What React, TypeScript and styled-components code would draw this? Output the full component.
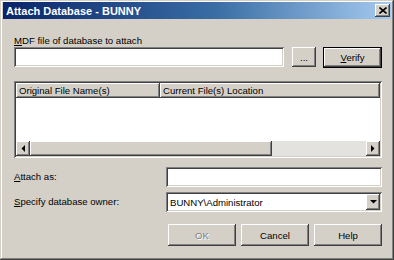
import React from "react";
import styled, { createGlobalStyle, css } from "styled-components";

const GlobalStyle = createGlobalStyle`
  html, body { margin: 0; padding: 0; background: #d4d0c8; }
  * { box-sizing: border-box; }
  body { font-family: "Liberation Sans", Arial, sans-serif; font-size: 9.6px; color: #000; }
`;

const raised = css`
  background: #d4d0c8;
  box-shadow: inset -1px -1px #404040, inset 1px 1px #ffffff,
    inset -2px -2px #808080, inset 2px 2px #d4d0c8;
`;

const sunken = css`
  background: #ffffff;
  box-shadow: inset 1px 1px #808080, inset -1px -1px #ffffff,
    inset 2px 2px #404040, inset -2px -2px #d4d0c8;
`;

const Window = styled.div`
  width: 394px;
  height: 260px;
  display: flex;
  flex-direction: column;
  padding: 2px 3px 3px 3px;
  background: #d4d0c8;
  box-shadow: inset -1px -1px #404040, inset 1px 1px #d4d0c8,
    inset -2px -2px #808080, inset 2px 2px #ffffff;
`;

const TitleBar = styled.div`
  height: 17px;
  display: flex;
  align-items: center;
  justify-content: space-between;
  padding: 0 1px 0 3px;
  background: linear-gradient(90deg, #0a246a 0%, #3a6ea5 55%, #a6caf0 100%);
`;

const TitleText = styled.span`
  color: #fff;
  font-weight: bold;
  font-size: 11px;
`;

const CloseButton = styled.div`
  ${raised};
  width: 15px;
  height: 13px;
  display: flex;
  align-items: center;
  justify-content: center;
`;

const Content = styled.div`
  flex: 1;
  display: flex;
  flex-direction: column;
  padding: 16px 9px 0 11px;
`;

const Label = styled.div`
  height: 12px;
  line-height: 12px;
  white-space: nowrap;
`;

const Key = styled.span`
  text-decoration: underline;
`;

const FileRow = styled.div`
  display: flex;
  align-items: center;
  height: 20px;
`;

const TextBox = styled.div<{ $width?: number }>`
  ${sunken};
  height: 20px;
  flex: ${(p) => (p.$width ? `0 0 ${p.$width}px` : "1")};
`;

const Button = styled.div<{ $width: number; $height?: number; $default?: boolean; $disabled?: boolean; $gap?: number }>`
  ${raised};
  width: ${(p) => p.$width}px;
  height: ${(p) => p.$height ?? 20}px;
  margin-left: ${(p) => p.$gap ?? 0}px;
  display: flex;
  align-items: center;
  justify-content: center;
  ${(p) =>
    p.$default &&
    css`
      box-shadow: inset 0 0 0 1px #000, inset -2px -2px #404040, inset 2px 2px #ffffff,
        inset -3px -3px #808080;
    `}
  ${(p) =>
    p.$disabled &&
    css`
      color: #808080;
      text-shadow: 1px 1px #ffffff;
    `}
`;

const ListView = styled.div`
  ${sunken};
  margin-top: 14px;
  height: 77px;
  padding: 2px;
  display: flex;
  flex-direction: column;
`;

const Header = styled.div`
  display: flex;
  height: 15px;
`;

const HeaderCell = styled.div<{ $width?: number }>`
  ${raised};
  flex: ${(p) => (p.$width ? `0 0 ${p.$width}px` : "1")};
  height: 15px;
  line-height: 15px;
  padding-left: 3px;
  white-space: nowrap;
  overflow: hidden;
`;

const ListBody = styled.div`
  flex: 1;
  background: #fff;
`;

const ScrollBar = styled.div`
  display: flex;
  height: 15px;
`;

const ScrollArrow = styled.div`
  ${raised};
  width: 14px;
  height: 15px;
  display: flex;
  align-items: center;
  justify-content: center;
`;

const Thumb = styled.div`
  ${raised};
  height: 15px;
`;

const Track = styled.div`
  flex: 1;
  background: #e4e2de;
`;

const FieldRow = styled.div<{ $top: number }>`
  display: grid;
  grid-template-columns: 152px 1fr;
  align-items: center;
  height: 20px;
  margin-top: ${(p) => p.$top}px;
`;

const Combo = styled.div`
  ${sunken};
  height: 20px;
  display: flex;
  align-items: center;
  justify-content: space-between;
  padding: 2px 2px 2px 4px;
`;

const ComboText = styled.span`
  white-space: nowrap;
`;

const ComboButton = styled.div`
  ${raised};
  width: 14px;
  height: 16px;
  display: flex;
  align-items: center;
  justify-content: center;
`;

const ButtonRow = styled.div`
  display: flex;
  justify-content: flex-end;
  margin-top: 12px;
`;

const ArrowLeft = () => (
  <svg width="4" height="7" viewBox="0 0 4 7">
    <polygon points="4,0 0.5,3.5 4,7" fill="#000" />
  </svg>
);
const ArrowRight = () => (
  <svg width="4" height="7" viewBox="0 0 4 7">
    <polygon points="0,0 3.5,3.5 0,7" fill="#000" />
  </svg>
);
const ArrowDown = () => (
  <svg width="7" height="4" viewBox="0 0 7 4">
    <polygon points="0,0 7,0 3.5,3.5" fill="#000" />
  </svg>
);

export default function App() {
  return (
    <>
      <GlobalStyle />
      <Window>
        <TitleBar>
          <TitleText>Attach Database - BUNNY</TitleText>
          <CloseButton>
            <svg width="8" height="7" viewBox="0 0 8 7">
              <path d="M0.5 0.5 L7.5 6.5 M7.5 0.5 L0.5 6.5" stroke="#000" strokeWidth="1.6" />
            </svg>
          </CloseButton>
        </TitleBar>
        <Content>
          <Label>
            <Key>M</Key>DF file of database to attach
          </Label>
          <FileRow>
            <TextBox />
            <Button $width={24} $gap={8}>...</Button>
            <Button $width={59} $gap={7} $height={21} $default>
              <span>
                <Key>V</Key>erify
              </span>
            </Button>
          </FileRow>
          <ListView>
            <Header>
              <HeaderCell $width={144}>Original File Name(s)</HeaderCell>
              <HeaderCell>Current File(s) Location</HeaderCell>
            </Header>
            <ListBody />
            <ScrollBar>
              <ScrollArrow>
                <ArrowLeft />
              </ScrollArrow>
              <Thumb style={{ width: 242 }} />
              <Track />
              <ScrollArrow>
                <ArrowRight />
              </ScrollArrow>
            </ScrollBar>
          </ListView>
          <FieldRow $top={9}>
            <Label>
              <Key>A</Key>ttach as:
            </Label>
            <TextBox />
          </FieldRow>
          <FieldRow $top={5}>
            <Label>
              <Key>S</Key>pecify database owner:
            </Label>
            <Combo>
              <ComboText>BUNNY\Administrator</ComboText>
              <ComboButton>
                <ArrowDown />
              </ComboButton>
            </Combo>
          </FieldRow>
          <ButtonRow>
            <Button $width={68} $height={22} $disabled>OK</Button>
            <Button $width={68} $height={22} $gap={5}>Cancel</Button>
            <Button $width={68} $height={22} $gap={5}>Help</Button>
          </ButtonRow>
        </Content>
      </Window>
    </>
  );
}
